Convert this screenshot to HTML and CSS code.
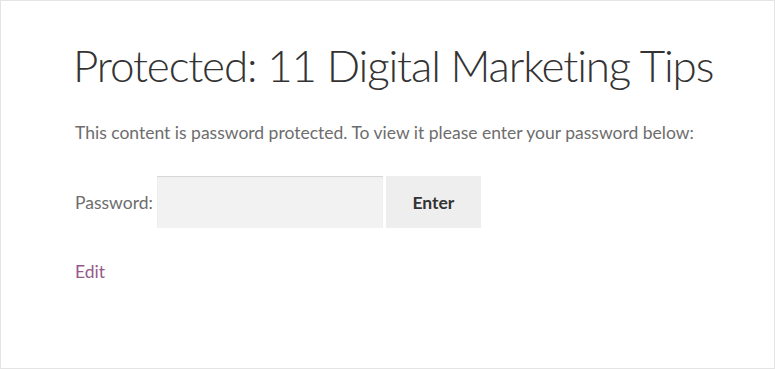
FILE: index.html
```html
<!DOCTYPE html>
<html>
<head>
<meta charset="utf-8">
<link rel="stylesheet" href="styles.css">
</head>
<body>
<div class="page">
  <h1 class="title">Protected: 11 Digital Marketing Tips</h1>
  <p class="notice">This content is password protected. To view it please enter your password below:</p>
  <form class="pwform">
    <label class="pwlabel">Password:</label>
    <input class="pwinput" type="password">
    <button class="pwbtn" type="button">Enter</button>
  </form>
  <a class="edit" href="#">Edit</a>
</div>
</body>
</html>
```

FILE: styles.css
```css
html, body {
  margin: 0;
  padding: 0;
  background: #ffffff;
}
.page {
  box-sizing: border-box;
  width: 775px;
  height: 369px;
  border: 1px solid #e4e4e4;
  padding: 34px 0 0 74px;
  font-family: Lato, "Open Sans", sans-serif;
}
.title {
  margin: 0 0 0 -2px;
  font-size: 44px;
  font-weight: 300;
  letter-spacing: -1.15px;
  white-space: nowrap;
  color: #333333;
  line-height: 60px;
}
.notice {
  margin: 24px 0 0;
  font-size: 17.5px;
  color: #6d6d6d;
  line-height: 28px;
}
.pwform {
  display: flex;
  align-items: center;
  margin: 29px 0 0;
}
.pwlabel {
  font-size: 17.5px;
  color: #6d6d6d;
  margin-right: 4px;
}
.pwinput {
  box-sizing: border-box;
  width: 226px;
  height: 52px;
  border: 0;
  background: #f2f2f2;
  box-shadow: inset 0 1px 1px rgba(0,0,0,0.125);
  margin: 0;
}
.pwbtn {
  box-sizing: border-box;
  width: 95px;
  height: 52px;
  margin: 0 0 0 3px;
  border: 0;
  background: #eeeeee;
  color: #333333;
  font-family: Lato, "Open Sans", sans-serif;
  font-weight: 700;
  font-size: 17.5px;
}
.edit {
  display: block;
  margin-top: 33px;
  font-size: 17.5px;
  color: #96588a;
  text-decoration: none;
}
```
